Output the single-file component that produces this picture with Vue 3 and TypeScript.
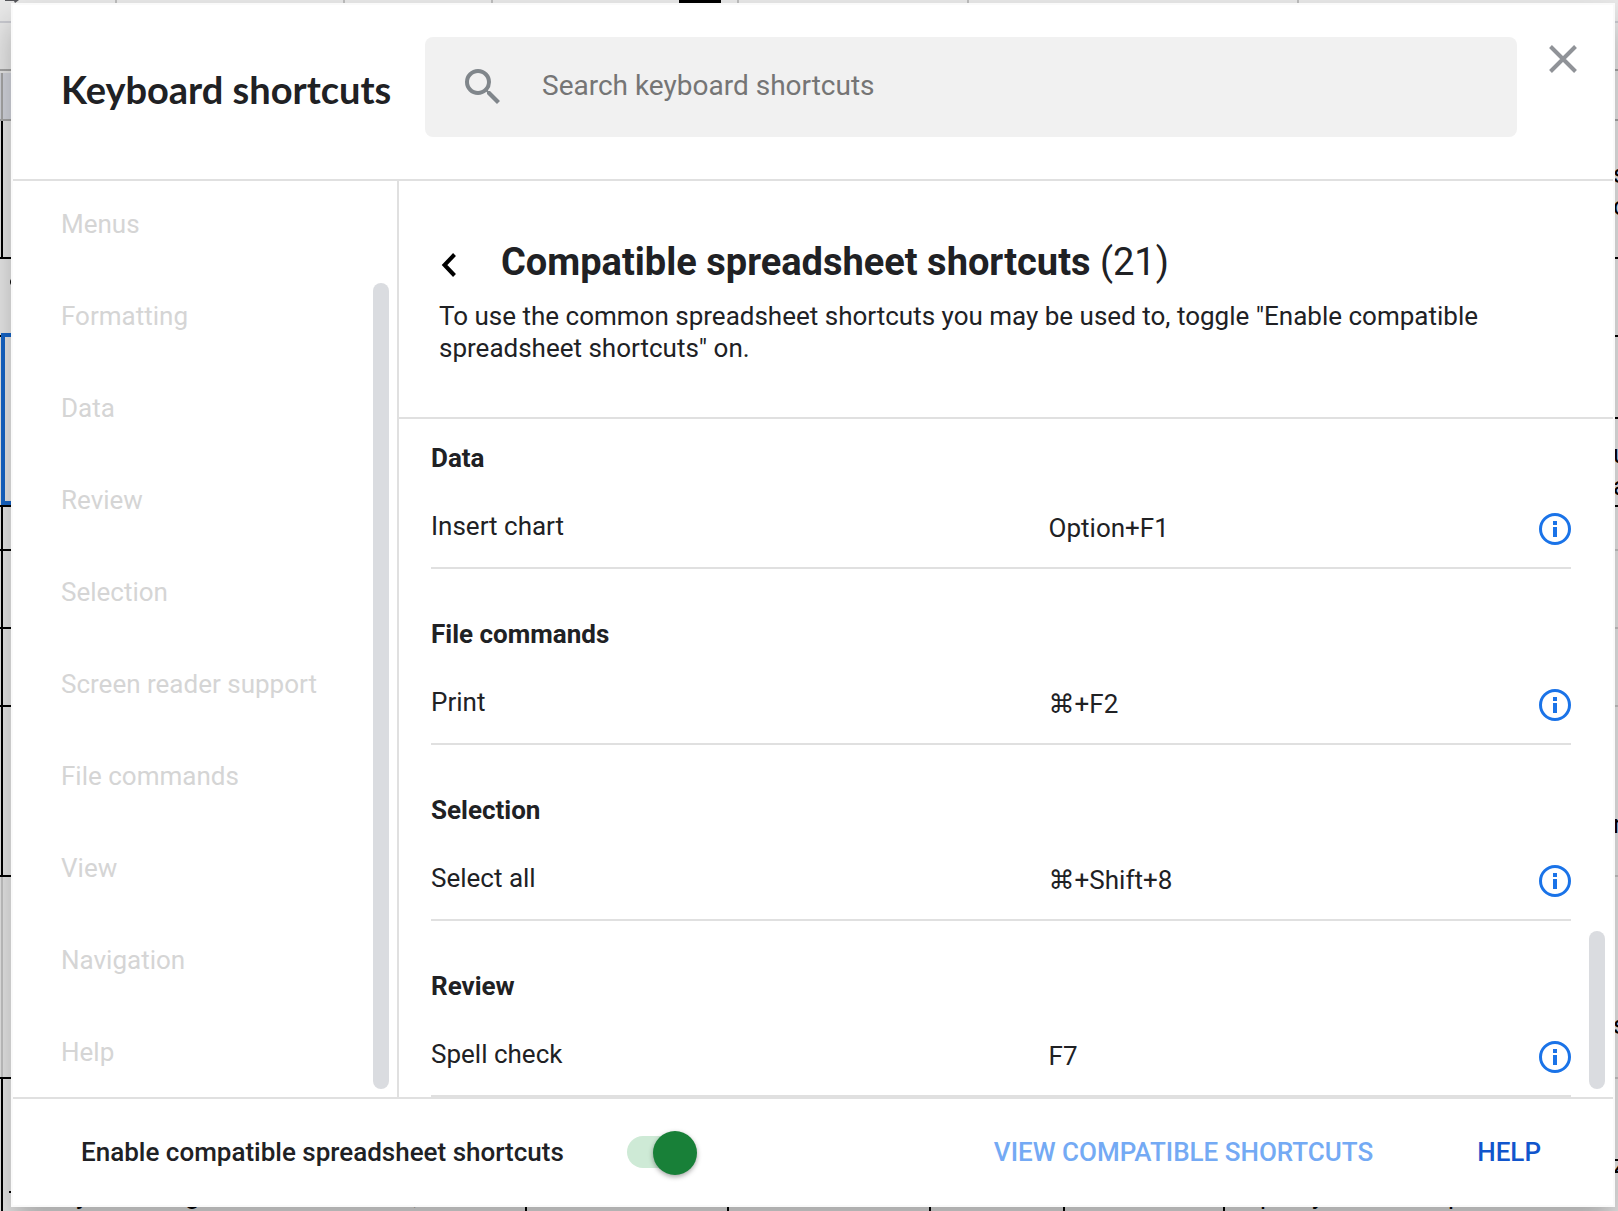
<script setup lang="ts">
import { ref } from 'vue'

interface Shortcut {
  name: string
  keys: string
}
interface Section {
  title: string
  shortcuts: Shortcut[]
}

const categories: string[] = [
  'Menus',
  'Formatting',
  'Data',
  'Review',
  'Selection',
  'Screen reader support',
  'File commands',
  'View',
  'Navigation',
  'Help',
]

const sections: Section[] = [
  { title: 'Data', shortcuts: [{ name: 'Insert chart', keys: 'Option+F1' }] },
  { title: 'File commands', shortcuts: [{ name: 'Print', keys: '⌘+F2' }] },
  { title: 'Selection', shortcuts: [{ name: 'Select all', keys: '⌘+Shift+8' }] },
  { title: 'Review', shortcuts: [{ name: 'Spell check', keys: 'F7' }] },
]

const query = ref('')
const enabled = ref(true)

// Grid lines of the sheet that stay visible around the dialog
const toolbarDividers = [115, 343, 491, 737, 967, 1297]
const columnBorders = [525, 727, 929, 1063, 1223]
const leftRowBorders = [257, 335, 505, 549, 627, 705, 875, 1077]
const rightRowBorders = [257, 335, 417, 505, 1171]
const rightRowHairlines = [549, 627, 705, 875, 1077]
const cellTails = [
  { text: 's', y: 183 },
  { text: 'c', y: 215 },
  { text: 'u', y: 463 },
  { text: 'a', y: 495 },
  { text: 'n', y: 833 },
  { text: 's', y: 1034 },
  { text: 'z', y: 1173 },
]
const cellDescenders = [
  { text: 'j', x: 78 },
  { text: 'g', x: 185 },
  { text: ',', x: 413 },
  { text: 'p', x: 1260 },
  { text: 'y', x: 1312 },
  { text: 'p', x: 1448 },
]
</script>

<template>
  <div class="page">
    <svg class="sheet" aria-hidden="true">
      <rect x="0" y="0" width="100%" height="100%" fill="#e8e8e8" />
      <rect x="0" y="21" width="100%" height="2" fill="#c9cad0" />
      <rect x="0" y="69" width="100%" height="2" fill="#a6a6a6" />
      <rect x="0" y="73" width="50%" height="46" fill="#d4d6de" />
      <rect x="0" y="119" width="100%" height="2" fill="#a6a6a6" />
      <path d="M5 0h14l-4 3-1-2H5z" fill="#55565a" />
      <rect v-for="x in toolbarDividers" :key="x" :x="x" y="0" width="2" height="3" fill="#bdbdbd" />
      <rect x="679" y="0" width="42" height="3" />
      <rect x="1" y="73" width="2" height="46" fill="#a6a6a6" />
      <rect x="1" y="121" width="2" height="138" />
      <rect x="1" y="507" width="2" height="370" />
      <rect x="1" y="877" width="2" height="200" fill="#c4c4c4" />
      <rect x="1" y="1077" width="2" height="100%" />
      <rect v-for="y in leftRowBorders" :key="y" x="0" :y="y" width="50%" height="2" />
      <rect x="3" y="335" width="400" height="168" fill="#e8e8e8" stroke="#1565c8" stroke-width="4" />
      <circle cx="15" cy="282" r="5" />
      <rect x="9" y="1191" width="8" height="2" />
      <rect v-for="y in rightRowBorders" :key="y" x="50%" :y="y" width="50%" height="2" />
      <rect v-for="y in rightRowHairlines" :key="y" x="50%" :y="y" width="50%" height="2" fill="#c4c4c4" />
      <rect v-for="x in columnBorders" :key="x" :x="x" y="1190" width="2" height="100%" />
      <text v-for="t in cellTails" :key="t.y" x="100%" :y="t.y" dx="-5">{{ t.text }}</text>
      <text v-for="t in cellDescenders" :key="t.x" :x="t.x" y="1204">{{ t.text }}</text>
    </svg>

    <main class="dialog" role="dialog" aria-labelledby="dialog-title">
      <header class="header">
        <h1 id="dialog-title" class="title">Keyboard shortcuts</h1>
        <label class="search">
          <svg class="search-icon" viewBox="0 0 24 24" aria-hidden="true">
            <path
              d="M15.5 14h-.79l-.28-.27A6.47 6.47 0 0 0 16 9.5 6.5 6.5 0 1 0 9.5 16c1.61 0 3.09-.59 4.23-1.57l.27.28v.79l5 4.99L20.49 19l-4.99-5zm-6 0C7.01 14 5 11.99 5 9.5S7.01 5 9.5 5 14 7.01 14 9.5 11.99 14 9.5 14z"
            />
          </svg>
          <input
            v-model="query"
            class="search-input"
            type="text"
            placeholder="Search keyboard shortcuts"
            aria-label="Search keyboard shortcuts"
          />
        </label>
        <button class="close" type="button" aria-label="Close">
          <svg viewBox="0 0 28 28" aria-hidden="true">
            <path d="M1.500 1.500L26.500 26.500M26.500 1.500L1.500 26.500" />
          </svg>
        </button>
      </header>

      <div class="body">
        <nav class="sidebar" aria-label="Shortcut categories">
          <a v-for="category in categories" :key="category" class="category" href="#">{{ category }}</a>
          <span class="thumb sidebar-thumb"></span>
        </nav>

        <section class="content">
          <div class="intro">
            <div class="intro-head">
              <button class="back" type="button" aria-label="Back">
                <svg viewBox="0 0 16 24" aria-hidden="true">
                  <path d="M13.500 1.500L3.500 12L13.500 22.500" />
                </svg>
              </button>
              <h2 class="heading">Compatible spreadsheet shortcuts <span class="count">(21)</span></h2>
            </div>
            <p class="description">
              To use the common spreadsheet shortcuts you may be used to, toggle "Enable compatible spreadsheet
              shortcuts" on.
            </p>
          </div>

          <div class="list">
            <section v-for="section in sections" :key="section.title" class="group">
              <h3 class="group-title">{{ section.title }}</h3>
              <table class="shortcuts">
                <tbody>
                  <tr v-for="s in section.shortcuts" :key="s.name">
                    <th class="name" scope="row">{{ s.name }}</th>
                    <td class="keys">{{ s.keys }}</td>
                    <td class="action">
                      <button class="info" type="button" :aria-label="`About ${s.name}`">
                        <svg viewBox="0 0 32 32" aria-hidden="true">
                          <circle cx="16" cy="16" r="14.500" />
                          <path d="M14 8h4v4h-4zM14 14h4v10h-4z" />
                        </svg>
                      </button>
                    </td>
                  </tr>
                </tbody>
              </table>
            </section>
            <span class="thumb list-thumb"></span>
          </div>
        </section>
      </div>

      <footer class="footer">
        <label class="toggle-label" for="enable-shortcuts">Enable compatible spreadsheet shortcuts</label>
        <input id="enable-shortcuts" v-model="enabled" class="toggle" type="checkbox" role="switch" />
        <button class="text-button view" type="button">VIEW COMPATIBLE SHORTCUTS</button>
        <button class="text-button help" type="button">HELP</button>
      </footer>
    </main>
  </div>
</template>

<style>
body {
  margin: 0;
}
</style>

<style scoped>
.page {
  position: relative;
  display: flex;
  box-sizing: border-box;
  min-height: 100vh;
  padding: 3px 3px 4px 11px;
  overflow: hidden;
  font-family: Roboto, 'DejaVu Sans', sans-serif;
  font-size: 26px;
  line-height: 32px;
  color: #202124;
}
.sheet {
  position: absolute;
  inset: 0;
  width: 100%;
  height: 100%;
  font-size: 26px;
}
.dialog {
  position: relative;
  flex: 1;
  min-width: 0;
  display: flex;
  flex-direction: column;
  background: #fff;
  border: 2px solid #fafafa;
  box-shadow: 0 20px 32px rgba(0, 0, 0, 0.28);
}
button {
  display: block;
  padding: 0;
  border: 0;
  background: none;
  font: inherit;
  cursor: pointer;
}
svg {
  display: block;
}

.header {
  display: flex;
  align-items: flex-start;
  padding: 32px 0 42px 48px;
  border-bottom: 2px solid #e0e0e0;
}
.title {
  flex: 0 0 364px;
  margin: 0;
  padding-top: 28px;
  font-family: Lato, Roboto, sans-serif;
  font-size: 38px;
  font-weight: 700;
  line-height: 48px;
  white-space: nowrap;
}
.search {
  flex: 1;
  min-width: 0;
  display: flex;
  align-items: center;
  gap: 35px;
  box-sizing: border-box;
  height: 100px;
  padding: 0 34px;
  border-radius: 8px;
  background: #f1f1f1;
}
.search-icon {
  flex: none;
  width: 48px;
  height: 48px;
  fill: #80868b;
}
.search-input {
  flex: 1;
  min-width: 0;
  height: 48px;
  padding: 0 0 4px;
  border: 0;
  outline: 0;
  background: none;
  font-family: inherit;
  font-size: 28px;
  color: #202124;
}
.search-input::placeholder {
  color: #757575;
}
.close {
  flex: none;
  margin: 8px 36px 0 32px;
}
.close svg {
  width: 28px;
  height: 28px;
  fill: none;
  stroke: #909398;
  stroke-width: 4;
}

.body {
  flex: 1;
  display: flex;
}
.sidebar {
  position: relative;
  flex: 0 0 384px;
  box-sizing: border-box;
  display: flex;
  flex-direction: column;
  align-items: flex-start;
  gap: 60px;
  padding: 27px 0 28px 48px;
}
.category {
  color: #d5d5d5;
  text-decoration: none;
}
.thumb {
  position: absolute;
  right: 8px;
  bottom: 8px;
  width: 16px;
  border-radius: 8px;
  background: #dadce0;
}
.sidebar-thumb {
  top: 102px;
}
.list-thumb {
  height: 158px;
}
.content {
  flex: 1;
  min-width: 0;
  display: flex;
  flex-direction: column;
  border-left: 2px solid #e0e0e0;
}
.intro {
  padding: 59px 40px 53px;
  border-bottom: 2px solid #e0e0e0;
}
.intro-head {
  display: flex;
  align-items: center;
  gap: 43px;
  margin-bottom: 16px;
}
.back {
  flex: none;
  margin: 6px 0 0 1px;
}
.back svg {
  width: 18px;
  height: 24px;
  fill: none;
  stroke: #000;
  stroke-width: 4;
}
.heading {
  margin: 0;
  font-size: 38px;
  font-weight: 700;
  line-height: 44px;
}
.count {
  font-weight: 400;
}
.description {
  margin: 0;
}
.list {
  position: relative;
  flex: 1;
  display: flex;
  flex-direction: column;
  gap: 49px;
  padding: 23px 42px 0 32px;
}
.group-title {
  margin: 0;
  font-size: 26px;
  font-weight: 700;
  line-height: 32px;
}
.shortcuts {
  width: 100%;
  table-layout: fixed;
  border-collapse: separate;
  border-spacing: 0;
  border-bottom: 2px solid #e0e0e0;
}
.shortcuts th,
.shortcuts td {
  vertical-align: top;
  text-align: left;
  font-weight: 400;
}
.shortcuts .name {
  width: 54%;
  padding: 36px 0 25px;
}
.shortcuts .keys {
  padding: 38px 0 23px 2px;
}
.shortcuts .action {
  width: 32px;
  padding: 39px 0 22px;
}
.info svg {
  width: 32px;
  height: 32px;
  fill: #1a73e8;
}
.info circle {
  fill: none;
  stroke: #1a73e8;
  stroke-width: 3;
}

.footer {
  display: flex;
  align-items: center;
  padding: 37px 72px 37px 68px;
  border-top: 2px solid #e0e0e0;
}
.toggle-label {
  font-weight: 500;
}
.toggle {
  appearance: none;
  position: relative;
  flex: none;
  width: 68px;
  height: 32px;
  margin: 0 0 0 63px;
  border-radius: 16px;
  background: #ceead6;
  cursor: pointer;
}
.toggle::after {
  content: '';
  position: absolute;
  top: -5px;
  right: -2px;
  width: 44px;
  height: 44px;
  border-radius: 50%;
  background: #188038;
  box-shadow: 0 2px 5px rgba(0, 0, 0, 0.35);
}
.toggle:not(:checked)::after {
  right: 26px;
  background: #fff;
}
.text-button {
  font-weight: 500;
}
.view {
  margin-left: auto;
  color: #74aaf4;
}
.help {
  margin-left: 104px;
  color: #1155cc;
}
</style>
